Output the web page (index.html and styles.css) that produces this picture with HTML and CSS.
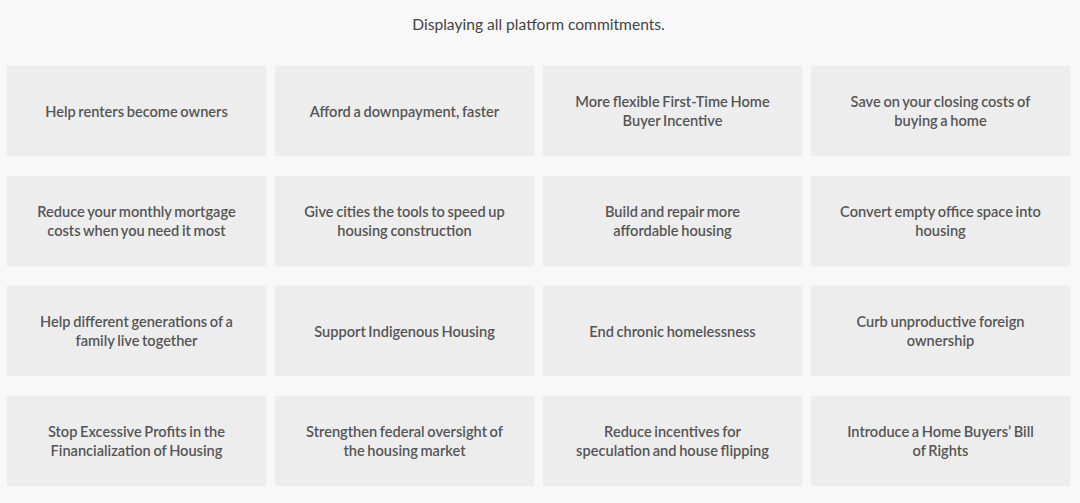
FILE: index.html
```html
<!DOCTYPE html>
<html lang="en">
<head>
<meta charset="utf-8">
<title>Platform commitments</title>
<link rel="stylesheet" href="styles.css">
</head>
<body>
<main class="page">
  <p class="status">Displaying all platform commitments.</p>
  <div class="grid">
    <a class="card" href="#"><span>Help renters become owners</span></a>
    <a class="card" href="#"><span>Afford a downpayment, faster</span></a>
    <a class="card" href="#"><span>More flexible First-Time Home Buyer Incentive</span></a>
    <a class="card" href="#"><span>Save on your closing costs of buying a home</span></a>
    <a class="card" href="#"><span>Reduce your monthly mortgage costs when you need it most</span></a>
    <a class="card" href="#"><span>Give cities the tools to speed up housing construction</span></a>
    <a class="card" href="#"><span>Build and repair more affordable housing</span></a>
    <a class="card" href="#"><span>Convert empty office space into housing</span></a>
    <a class="card" href="#"><span>Help different generations of a family live together</span></a>
    <a class="card" href="#"><span>Support Indigenous Housing</span></a>
    <a class="card" href="#"><span>End chronic homelessness</span></a>
    <a class="card" href="#"><span>Curb unproductive foreign ownership</span></a>
    <a class="card" href="#"><span>Stop Excessive Profits in the Financialization of Housing</span></a>
    <a class="card" href="#"><span>Strengthen federal oversight of the housing market</span></a>
    <a class="card" href="#"><span>Reduce incentives for speculation and house flipping</span></a>
    <a class="card" href="#"><span>Introduce a Home Buyers’ Bill of Rights</span></a>
  </div>
</main>
</body>
</html>
```

FILE: styles.css
```css
html, body {
  margin: 0;
  padding: 0;
  background: #f8f8f8;
}

body {
  font-family: Lato, "Liberation Sans", sans-serif;
  color: #4a4a4a;
}

.page {
  padding: 13px 10px 0 7px;
}

.status {
  margin: 0 0 31px;
  text-align: center;
  font-size: 15.6px;
  line-height: 22px;
  color: #444;
}

.grid {
  display: grid;
  grid-template-columns: repeat(4, 259px);
  column-gap: 9px;
  row-gap: 20px;
}

.card {
  height: 90px;
  display: flex;
  align-items: center;
  justify-content: center;
  padding: 0 29px;
  box-sizing: border-box;
  background: #ededed;
  box-shadow: 0 0 2px rgba(0, 0, 0, 0.04);
  text-align: center;
  text-decoration: none;
  color: #555;
  font-size: 14.6px;
  font-weight: 600;
  word-spacing: -1px;
  line-height: 19px;
}
```
